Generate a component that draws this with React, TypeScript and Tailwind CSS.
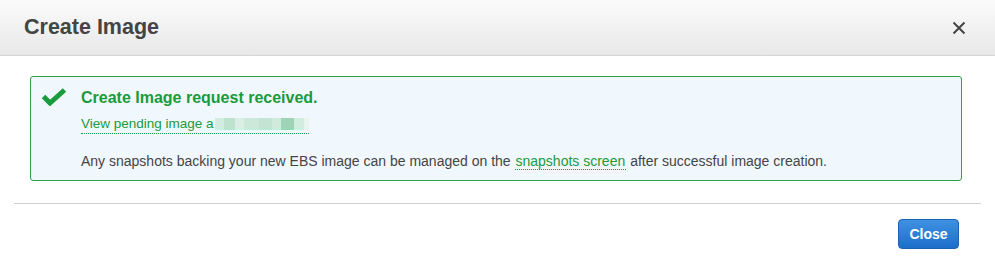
import { useState } from "react";

export default function App() {
  const [open, setOpen] = useState(true);

  return (
    <div className="w-[995px] h-[267px] bg-white font-['Liberation_Sans',Arial,sans-serif] text-[#444]">
      {/* Header */}
      <div className="h-[56px] flex items-center justify-between pl-[24px] pr-[28px] border-b border-[#d5d5d5] bg-gradient-to-b from-[#fbfbfb] to-[#e8e8e8]">
        <h1 className="text-[21.5px] font-bold text-[#444] leading-none">Create Image</h1>
        <button onClick={() => setOpen(false)} className="w-[16px] h-[16px] flex items-center justify-center">
          <svg width="14" height="14" viewBox="0 0 14 14">
            <path d="M1.5 1.5L12.5 12.5M12.5 1.5L1.5 12.5" stroke="#444" strokeWidth="2" />
          </svg>
        </button>
      </div>

      {/* Body */}
      <div className="px-[14px] pt-[20px]">
        {open && (
          <div className="ml-[16px] mr-[19px] border border-[#2aa148] rounded-[3px] bg-[#f0f8fd] flex gap-[14px] pl-[10px] pt-[11px] pb-[10px]">
            <svg width="26" height="18" viewBox="0 0 26 18" className="shrink-0">
              <polyline points="2.5,8.5 9,15 23.5,2" fill="none" stroke="#1a9c3e" strokeWidth="5" />
            </svg>
            <div className="flex flex-col">
              <div className="text-[16px] font-bold text-[#1a9a3b] leading-[20px]">Create Image request received.</div>
              <div className="mt-[7px] flex">
                <a className="text-[13.5px] text-[#1a9a3b] leading-[18px] border-b border-dotted border-[#1a9a3b] flex items-center">
                  View pending image a
                  <span className="flex h-[12px] ml-[1px]">
                    <span className="w-[9px] bg-[#d3ece0]" />
                    <span className="w-[11px] bg-[#bfe2cf]" />
                    <span className="w-[9px] bg-[#d9efe4]" />
                    <span className="w-[15px] bg-[#cbe8d9]" />
                    <span className="w-[13px] bg-[#c4e4d3]" />
                    <span className="w-[9px] bg-[#d0ebdc]" />
                    <span className="w-[13px] bg-[#9fd3b6]" />
                    <span className="w-[10px] bg-[#d3ece0]" />
                    <span className="w-[5px] bg-[#e8f5ee]" />
                  </span>
                </a>
              </div>
              <p className="mt-[18px] text-[14px] leading-[18px] text-[#444]">
                Any snapshots backing your new EBS image can be managed on the{" "}
                <a className="text-[#1a9a3b] border-b border-dotted border-[#1a9a3b] px-[1px]">snapshots screen</a>{" "}
                after successful image creation.
              </p>
            </div>
          </div>
        )}
        <div className="mt-[22px] border-t border-[#d0d0d0]" />
        <div className="flex justify-end pr-[22px] pt-[15px]">
          <button
            onClick={() => setOpen(false)}
            className="h-[30px] w-[61px] rounded-[4px] border border-[#1b62b3] bg-gradient-to-b from-[#3f91e2] to-[#1b6ec9] text-white text-[14px] font-bold"
          >
            Close
          </button>
        </div>
      </div>
    </div>
  );
}
